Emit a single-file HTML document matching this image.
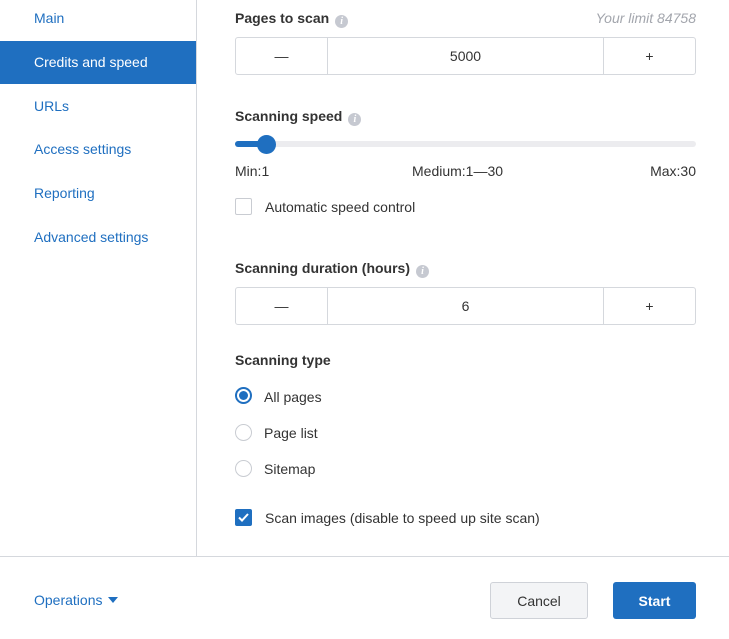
<!DOCTYPE html>
<html><head><style>
*{box-sizing:border-box;margin:0;padding:0}
body{width:729px;height:639px;background:#fff;font-family:"Liberation Sans",sans-serif;font-size:14px;color:#333;position:relative;overflow:hidden}
.a{position:absolute;white-space:nowrap}
.nav{color:#1f6fc0;left:34px}
.lbl{font-weight:bold;color:#333;font-size:14px}
.info{display:inline-block;width:13px;height:13px;border-radius:50%;background:#c6c9d1;color:#fff;font-size:10px;font-style:italic;font-weight:bold;text-align:center;line-height:13px;vertical-align:-1px;margin-left:6px;font-family:"Liberation Serif",serif}
.stp{position:absolute;left:235px;width:461px;height:38px;border:1px solid #d5d8dd;border-radius:3px;display:flex}
.stp div{display:flex;align-items:center;justify-content:center;font-size:14px}
.radio{position:absolute;left:235px;width:17px;height:17px;border:1px solid #c9ccd2;border-radius:50%}
</style></head><body>
<div class="a" style="left:196px;top:0;width:1px;height:556px;background:#d5d8dd"></div>
<div class="a" style="left:0;top:556px;width:729px;height:1px;background:#d5d8dd"></div>
<div class="a nav" style="top:10px">Main</div>
<div class="a" style="left:0;top:41px;width:196px;height:43px;background:#1f6fc0"></div>
<div class="a" style="left:34px;top:54px;color:#fff">Credits and speed</div>
<div class="a nav" style="top:98px">URLs</div>
<div class="a nav" style="top:141px">Access settings</div>
<div class="a nav" style="top:185px">Reporting</div>
<div class="a nav" style="top:229px">Advanced settings</div>

<div class="a lbl" style="left:235px;top:10px">Pages to scan<span class="info">i</span></div>
<div class="a" style="right:33px;top:10px;color:#a3a6ad;font-style:italic">Your limit 84758</div>
<div class="stp" style="top:37px"><div style="width:92px;border-right:1px solid #d5d8dd">—</div><div style="flex:1;border-right:1px solid #d5d8dd">5000</div><div style="width:91px">+</div></div>

<div class="a lbl" style="left:235px;top:108px">Scanning speed<span class="info">i</span></div>
<div class="a" style="left:235px;top:141px;width:461px;height:6px;border-radius:3px;background:#ececef"></div>
<div class="a" style="left:235px;top:141px;width:32px;height:6px;border-radius:3px;background:#1f6fc0"></div>
<div class="a" style="left:257px;top:135px;width:19px;height:19px;border-radius:50%;background:#1f6fc0"></div>
<div class="a" style="left:235px;top:163px">Min:1</div>
<div class="a" style="left:412px;top:163px">Medium:1—30</div>
<div class="a" style="right:33px;top:163px">Max:30</div>
<div class="a" style="left:235px;top:198px;width:17px;height:17px;border:1px solid #c9ccd2;border-radius:2px"></div>
<div class="a" style="left:265px;top:199px">Automatic speed control</div>

<div class="a lbl" style="left:235px;top:260px">Scanning duration (hours)<span class="info">i</span></div>
<div class="stp" style="top:287px"><div style="width:92px;border-right:1px solid #d5d8dd">—</div><div style="flex:1;border-right:1px solid #d5d8dd">6</div><div style="width:91px">+</div></div>

<div class="a lbl" style="left:235px;top:352px">Scanning type</div>
<div class="radio" style="top:387px;border:2px solid #1f6fc0"><div style="position:absolute;left:2px;top:2px;width:9px;height:9px;border-radius:50%;background:#1f6fc0"></div></div>
<div class="a" style="left:264px;top:389px">All pages</div>
<div class="radio" style="top:424px"></div>
<div class="a" style="left:264px;top:425px">Page list</div>
<div class="radio" style="top:460px"></div>
<div class="a" style="left:264px;top:461px">Sitemap</div>
<div class="a" style="left:235px;top:509px;width:17px;height:17px;background:#1f6fc0;border-radius:2px"><svg width="17" height="17"><path d="M4 8.5l3 3 6-6.5" stroke="#fff" stroke-width="2" fill="none"/></svg></div>
<div class="a" style="left:265px;top:510px">Scan images (disable to speed up site scan)</div>

<div class="a" style="left:34px;top:592px;color:#1f6fc0">Operations <span style="display:inline-block;border-left:5px solid transparent;border-right:5px solid transparent;border-top:6px solid #1f6fc0;vertical-align:2px;margin-left:2px"></span></div>
<div class="a" style="left:490px;top:582px;width:98px;height:37px;border:1px solid #cfd2d8;border-radius:3px;background:#f3f4f6;display:flex;align-items:center;justify-content:center">Cancel</div>
<div class="a" style="left:613px;top:582px;width:83px;height:37px;border-radius:3px;background:#1f6fc0;color:#fff;font-weight:bold;display:flex;align-items:center;justify-content:center">Start</div>
</body></html>
